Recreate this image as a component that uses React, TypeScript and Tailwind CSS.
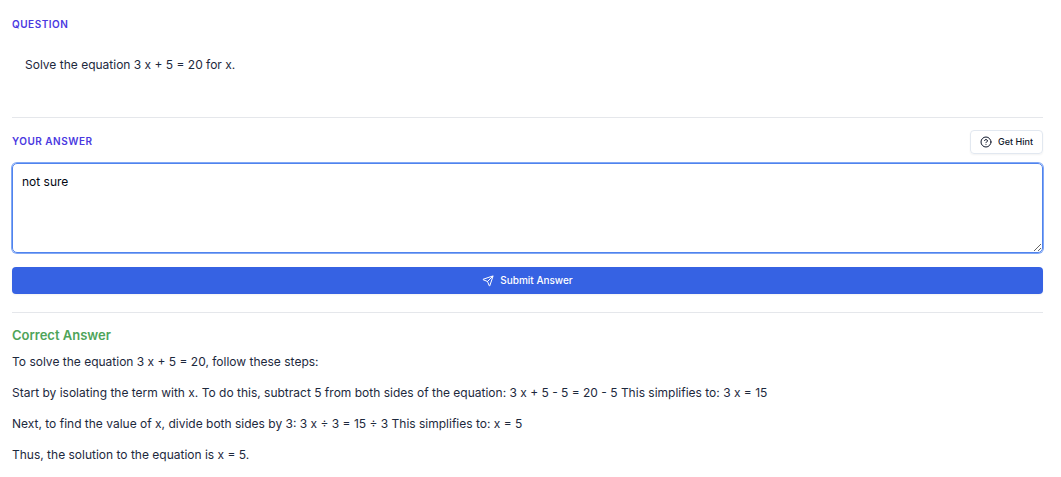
import { useState } from "react";
import { CircleHelp, Send } from "lucide-react";

const steps = [
  "To solve the equation 3 x + 5 = 20, follow these steps:",
  "Start by isolating the term with x. To do this, subtract 5 from both sides of the equation: 3 x + 5 - 5 = 20 - 5 This simplifies to: 3 x = 15",
  "Next, to find the value of x, divide both sides by 3: 3 x ÷ 3 = 15 ÷ 3 This simplifies to: x = 5",
  "Thus, the solution to the equation is x = 5.",
];

export default function App() {
  return (
    <main className="flex flex-col bg-white pt-4 pr-[18px] pb-3 pl-3 font-['Inter',sans-serif] text-xs text-slate-800">
      <Question />
      <AnswerForm />
      <CorrectAnswer />
    </main>
  );
}

const Question = () => (
  <section className="border-b border-gray-200 pb-[42px]">
    <h2 className="text-[10px] leading-4 font-semibold tracking-wider text-[#4a39df] uppercase">
      Question
    </h2>
    <p className="px-[13px] pt-[22px] leading-[21px]">
      Solve the equation 3 x + 5 = 20 for x.
    </p>
  </section>
);

const AnswerForm = () => {
  const [answer, setAnswer] = useState("not sure");

  return (
    <form
      className="flex flex-col border-b border-gray-200 pt-3 pb-[18px]"
      onSubmit={(e) => e.preventDefault()}
    >
      <div className="flex items-start justify-between">
        <label
          htmlFor="answer"
          className="pt-[3px] text-[10px] leading-4 font-semibold tracking-wider text-[#4a39df] uppercase"
        >
          Your Answer
        </label>
        <button
          type="button"
          className="flex h-6 items-center gap-1.5 rounded border border-slate-200 px-[9px] text-[9px] font-medium text-slate-900 shadow-xs hover:bg-gray-50"
        >
          <CircleHelp className="size-3" />
          Get Hint
        </button>
      </div>
      <textarea
        id="answer"
        value={answer}
        onChange={(e) => setAnswer(e.target.value)}
        className="mt-[9px] h-[90px] w-full resize-y rounded-[5px] border border-[#4f83ee] px-[9px] py-[9px] leading-[18px] text-gray-950 ring-1 ring-[#82a8f4] outline-none"
      />
      <button
        type="submit"
        className="mt-3.5 flex h-[27px] items-center justify-center gap-1.5 rounded bg-[#3662e3] text-[10px] font-medium text-white shadow-xs hover:bg-blue-700"
      >
        <Send className="size-3" />
        Submit Answer
      </button>
    </form>
  );
};

const CorrectAnswer = () => (
  <section className="pt-3">
    <h3 className="text-[13px] leading-5 font-semibold text-[#4ea459]">
      Correct Answer
    </h3>
    <div className="flex flex-col gap-[10px] pt-1.5 leading-[21px]">
      {steps.map((step) => (
        <p key={step}>{step}</p>
      ))}
    </div>
  </section>
);
